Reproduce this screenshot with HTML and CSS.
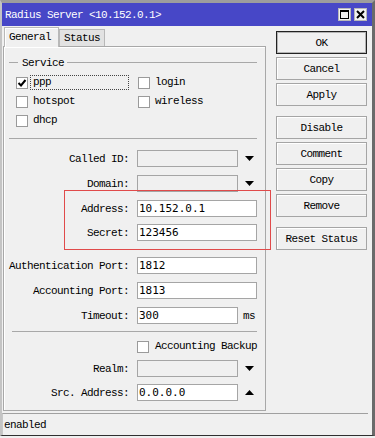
FILE: index.html
```html
<!DOCTYPE html>
<html>
<head>
    <link rel="stylesheet" href="styles.css">
</head>
<body>
    <div class="window">
        <div class="titlebar">
            <span class="title">Radius Server &lt;10.152.0.1&gt;</span>
            <div class="tb-btns">
                <div class="tb-btn">
                    <svg width="11" height="11" viewBox="0 0 11 11"><rect x="1.5" y="1.5" width="8" height="8" fill="none" stroke="#000" stroke-width="1"/><rect x="1" y="1" width="9" height="2" fill="#000"/></svg>
                </div>
                <div class="tb-btn">
                    <svg width="11" height="11" viewBox="0 0 11 11"><path d="M2 2 L9 9 M9 2 L2 9" stroke="#000" stroke-width="2"/></svg>
                </div>
            </div>
        </div>

        <div class="content">
            <div class="main">
                <div class="tabs">
                    <div class="tab active">General</div>
                    <div class="tab">Status</div>
                </div>
                <div class="panel">
                    <div class="group">
                        <div class="group-head"><span>Service</span></div>
                        <div class="checks">
                            <div class="cb-item">
                                <span class="cb"><svg width="10" height="10" viewBox="0 0 10 10"><path d="M1.5 5 L4 7.5 L8.5 2" fill="none" stroke="#000" stroke-width="2"/></svg></span>
                                <span class="cb-label focus">ppp</span>
                            </div>
                            <div class="cb-item"><span class="cb"></span><span class="cb-label">login</span></div>
                            <div class="cb-item"><span class="cb"></span><span class="cb-label">hotspot</span></div>
                            <div class="cb-item"><span class="cb"></span><span class="cb-label">wireless</span></div>
                            <div class="cb-item"><span class="cb"></span><span class="cb-label">dhcp</span></div>
                        </div>
                    </div>

                    <div class="fields">
                        <div class="row first">
                            <label>Called ID:</label>
                            <div class="ctl">
                                <div class="inp short grey"></div>
                                <svg class="arrow" width="9" height="5" viewBox="0 0 9 5"><path d="M0 0 H9 L4.5 5 Z" fill="#000"/></svg>
                            </div>
                        </div>
                        <div class="row">
                            <label>Domain:</label>
                            <div class="ctl">
                                <div class="inp short grey"></div>
                                <svg class="arrow" width="9" height="5" viewBox="0 0 9 5"><path d="M0 0 H9 L4.5 5 Z" fill="#000"/></svg>
                            </div>
                        </div>
                        <div class="highlight">
                            <div class="row">
                                <label>Address:</label>
                                <div class="ctl"><div class="inp">10.152.0.1</div></div>
                            </div>
                            <div class="row tight">
                                <label>Secret:</label>
                                <div class="ctl"><div class="inp">123456</div></div>
                            </div>
                        </div>
                        <div class="row spaced">
                            <label>Authentication Port:</label>
                            <div class="ctl"><div class="inp">1812</div></div>
                        </div>
                        <div class="row">
                            <label>Accounting Port:</label>
                            <div class="ctl"><div class="inp">1813</div></div>
                        </div>
                        <div class="row">
                            <label>Timeout:</label>
                            <div class="ctl">
                                <div class="inp short">300</div>
                                <span class="unit">ms</span>
                            </div>
                        </div>
                        <div class="sep"></div>
                        <div class="row check-row">
                            <label></label>
                            <div class="ctl">
                                <div class="cb-item"><span class="cb"></span><span class="cb-label">Accounting Backup</span></div>
                            </div>
                        </div>
                        <div class="row realm">
                            <label>Realm:</label>
                            <div class="ctl">
                                <div class="inp short grey"></div>
                                <svg class="arrow" width="9" height="5" viewBox="0 0 9 5"><path d="M0 0 H9 L4.5 5 Z" fill="#000"/></svg>
                            </div>
                        </div>
                        <div class="row tight">
                            <label>Src. Address:</label>
                            <div class="ctl">
                                <div class="inp short">0.0.0.0</div>
                                <svg class="arrow" width="9" height="5" viewBox="0 0 9 5"><path d="M0 5 H9 L4.5 0 Z" fill="#000"/></svg>
                            </div>
                        </div>
                    </div>
                </div>
            </div>

            <div class="side">
                <div class="btn default">OK</div>
                <div class="btn">Cancel</div>
                <div class="btn">Apply</div>
                <div class="btn gap">Disable</div>
                <div class="btn">Comment</div>
                <div class="btn">Copy</div>
                <div class="btn">Remove</div>
                <div class="btn gap">Reset Status</div>
            </div>
        </div>

        <div class="statusbar">enabled</div>
    </div>
</body>
</html>
```

FILE: styles.css
```css
* {
    box-sizing: border-box;
}

body {
    margin: 0;
    background: #f0f0f0;
    font-family: "Liberation Mono", "DejaVu Sans Mono", monospace;
    font-size: 11px;
    letter-spacing: -0.6px;
    color: #000;
}

.window {
    width: 375px;
    height: 436px;
    background: #f0f0f0;
    border-top: 3px solid #9d9d9d;
    border-left: 2px solid #c4c4c4;
    border-right: 3px solid #6a6a6a;
    border-bottom: 1px solid #303030;
    display: flex;
    flex-direction: column;
}

/* title bar */
.titlebar {
    height: 23px;
    background: #4747c7;
    color: #fff;
    display: flex;
    align-items: center;
    padding: 0 5px 0 3px;
}

.tb-btns {
    margin-left: auto;
    display: flex;
    gap: 3px;
}

.tb-btn {
    width: 13px;
    height: 13px;
    background: #f2f2f2;
    border: 1px solid #b8b8b8;
    display: flex;
    align-items: center;
    justify-content: center;
}

/* body */
.content {
    height: 387px;
    display: flex;
    padding-left: 1px;
}

.main {
    width: 263px;
}

.tabs {
    display: flex;
    height: 20px;
    padding-top: 1px;
    padding-left: 1px;
    align-items: flex-end;
}

.tab {
    height: 17px;
    padding: 0 4px;
    background: #e2e2e2;
    border: 1px solid #b8b8b8;
    border-bottom: none;
    line-height: 16px;
}

.tab.active {
    height: 20px;
    width: 55px;
    background: #f0f0f0;
    box-shadow: inset 1px 1px 0 #fff;
    position: relative;
    z-index: 1;
    margin-bottom: -1px;
    padding-top: 1px;
}

.panel {
    height: 365px;
    border: 1px solid #a8a8a8;
    box-shadow: inset 1px 1px 0 #fff;
}

/* service group */
.group {
    margin: 9px 8px 0 5px;
    border-bottom: 1px solid #a8a8a8;
    padding-bottom: 8px;
}

.group-head {
    height: 13px;
    display: flex;
    align-items: center;
}

.group-head::before,
.group-head::after {
    content: "";
    height: 1px;
    background: #a8a8a8;
}

.group-head::before {
    width: 9px;
}

.group-head::after {
    flex: 1;
}

.group-head span {
    padding: 0 3px 0 4px;
}

.checks {
    margin-top: 4px;
    padding-left: 7px;
    display: grid;
    grid-template-columns: 122px auto;
    grid-auto-rows: 19px;
}

.cb-item {
    display: flex;
    align-items: center;
    gap: 2px;
    white-space: nowrap;
}

.cb {
    flex: none;
    width: 12px;
    height: 12px;
    background: #fff;
    border: 1px solid #9a9a9a;
    display: flex;
    align-items: center;
    justify-content: center;
}

.cb-label {
    padding: 0 2px;
    border: 1px solid transparent;
    line-height: 13px;
}

.cb-label.focus {
    width: 99px;
    border: 1px dotted #444;
}

/* fields */
.row {
    display: grid;
    grid-template-columns: 126px 120px;
    column-gap: 7px;
    align-items: center;
    height: 17px;
    margin-top: 8px;
}

.row.first {
    margin-top: 11px;
}

.row.tight {
    margin-top: 7px;
}

.row.spaced {
    margin-top: 16px;
}

.row label {
    text-align: right;
    padding-right: 1px;
    white-space: nowrap;
}

.ctl {
    display: flex;
    align-items: center;
}

.inp {
    flex: none;
    width: 120px;
    height: 17px;
    background: #fff;
    border: 1px solid #a5a5a5;
    padding-left: 1px;
    font-family: "DejaVu Sans Mono", monospace;
    letter-spacing: 0;
    line-height: 15px;
}

.inp.short {
    width: 101px;
}

.inp.grey {
    background: #f0f0f0;
}

.arrow {
    margin-left: 7px;
}

.unit {
    margin-left: 5px;
}

/* red annotation frame round address and secret */
.highlight {
    position: relative;
}

.highlight::before {
    content: "";
    position: absolute;
    left: 60px;
    top: -10px;
    width: 205px;
    height: 58px;
    border: 1px solid #e04a4a;
}

.sep {
    margin: 7px 8px 0 8px;
    height: 1px;
    background: #a8a8a8;
}

.row.check-row {
    height: 12px;
    margin-top: 7px;
}

.row.check-row .cb-item {
    gap: 3px;
}

.row.realm {
    margin-top: 9px;
}

/* buttons */
.side {
    width: 91px;
    margin-left: 10px;
    padding-top: 5px;
    display: flex;
    flex-direction: column;
    gap: 3px;
}

.btn {
    height: 23px;
    border: 1px solid #a5a5a5;
    box-shadow: inset 1px 1px 0 #fff;
    display: flex;
    align-items: center;
    justify-content: center;
}

.btn.default {
    border-color: #222;
    box-shadow: inset 0 0 0 1px #b4b4b4;
}

.btn.gap {
    margin-top: 7px;
}

/* status bar */
.statusbar {
    height: 22px;
    margin-right: 4px;
    border-top: 1px solid #a0a0a0;
    border-left: 1px solid #c8c8c8;
    padding-left: 1px;
    display: flex;
    align-items: center;
}
```
